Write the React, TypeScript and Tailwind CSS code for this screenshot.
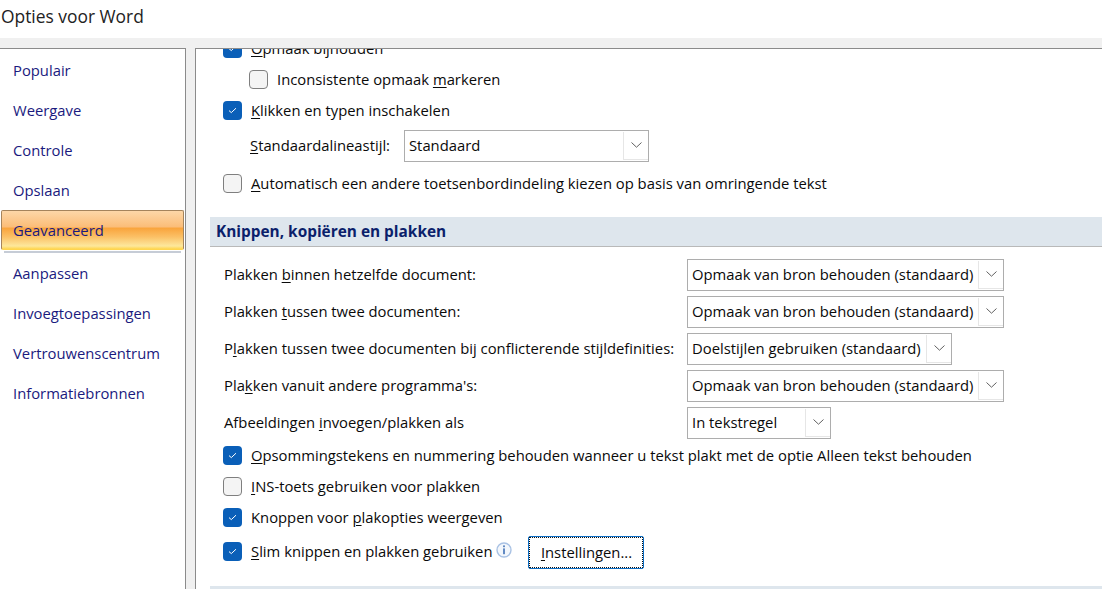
const font = "[font-family:'Open_Sans','Noto_Sans',sans-serif]"

const navItems = ['Populair', 'Weergave', 'Controle', 'Opslaan']
const navItemsBelow = ['Aanpassen', 'Invoegtoepassingen', 'Vertrouwenscentrum', 'Informatiebronnen']

function Check({ checked }: { checked?: boolean }) {
  if (checked) {
    return (
      <span className="flex h-[19px] w-[19px] shrink-0 items-center justify-center rounded-[4px] bg-[#0a5fb8]">
        <svg width="9" height="7" viewBox="0 0 9 7" fill="none">
          <path d="M1 3.6 3.3 5.6 8 1.2" stroke="#fff" strokeWidth="1" />
        </svg>
      </span>
    )
  }
  return <span className="h-[19px] w-[19px] shrink-0 rounded-[4px] border border-[#7f7f7f] bg-[#f4f4f4]" />
}

function Select({ value, width }: { value: string; width: string }) {
  return (
    <div className={`flex h-[32px] items-stretch border border-[#adadad] bg-white pl-[4px] ${width}`}>
      <span className="flex-1 self-center whitespace-nowrap text-[14.8px] text-[#0a0a0a]">{value}</span>
      <span className="my-[1px] flex w-[25px] items-center justify-center border-l border-b border-[#e6e6e6]">
        <svg width="11" height="6" viewBox="0 0 11 6" fill="none">
          <path d="M.5.5 5.5 5.2 10.5.5" stroke="#606060" strokeWidth="1" />
        </svg>
      </span>
    </div>
  )
}

function PasteRow({ label, value, width }: { label: React.ReactNode; value: string; width: string }) {
  return (
    <div className="flex h-[37px] items-center">
      <span className="w-[463px] shrink-0 whitespace-nowrap">{label}</span>
      <Select value={value} width={width} />
    </div>
  )
}

function CheckRow({ checked, height, children }: { checked?: boolean; height: string; children: React.ReactNode }) {
  return (
    <div className={`flex items-center gap-[9px] ${height}`}>
      <Check checked={checked} />
      <span className="whitespace-nowrap">{children}</span>
    </div>
  )
}

export default function App() {
  return (
    <div className={`flex h-[589px] w-[1102px] flex-col overflow-hidden bg-[#f0f0f0] text-[14.8px] text-[#0a0a0a] ${font}`}>
      <div className="flex h-[38px] shrink-0 items-center bg-white pl-[1px] pb-[5px] text-[17.4px] text-[#222]">
        Opties voor Word
      </div>

      <div className="mt-[10px] flex min-h-0 flex-1">
        {/* Sidebar */}
        <nav className="w-[186px] shrink-0 border-t border-r border-[#8b8b8b] bg-white pt-[1px] text-[#1a1a7e]">
          {navItems.map((item) => (
            <div key={item} className="flex h-[40px] items-center pl-[13px]">
              {item}
            </div>
          ))}
          <div className="ml-[1px] flex h-[40px] w-[183px] items-center rounded-[2px] border border-[#a5845c] border-b-[#ffd54f] bg-[linear-gradient(#fdd7a8_0%,#fbbd78_42%,#f9a43c_45%,#fbc066_68%,#fde89c_92%,#ffd54f_100%)] pl-[11px]">
            Geavanceerd
          </div>
          <div className="ml-[4px] mt-[1px] h-[2px] w-[177px] bg-[#c6ccd6]" />
          <div>
            {navItemsBelow.map((item) => (
              <div key={item} className="flex h-[40px] items-center pl-[13px]">
                {item}
              </div>
            ))}
          </div>
        </nav>

        {/* Content */}
        <main className="ml-[9px] min-w-0 flex-1 overflow-hidden border-t border-l border-[#8b8b8b] bg-white">
          <div className="-mt-[16px] pl-[14px]">
            <div className="pl-[13px]">
              <CheckRow checked height="h-[31px]">
                <span className="underline underline-offset-2">O</span>pmaak bijhouden
              </CheckRow>
              <div className="pl-[26px]">
                <CheckRow height="h-[31px]">
                  Inconsistente opmaak <span className="underline underline-offset-2">m</span>arkeren
                </CheckRow>
              </div>
              <CheckRow checked height="h-[31px]">
                <span className="underline underline-offset-2">K</span>likken en typen inschakelen
              </CheckRow>
              <div className="flex h-[39px] items-center pl-[27px]">
                <span className="w-[154px] whitespace-nowrap">
                  <span className="underline underline-offset-2">S</span>tandaardalineastijl:
                </span>
                <Select value="Standaard" width="w-[245px]" />
              </div>
              <CheckRow height="h-[37px]">
                <span className="underline underline-offset-2">A</span>utomatisch een andere toetsenbordindeling kiezen op basis van omringende tekst
              </CheckRow>
            </div>

            <div className="mt-[15px] flex h-[30px] items-center border-b border-[#b9b9b9] bg-[#dee6ed] pl-[6px] text-[15.4px] font-bold text-[#0b1f6b]">
              Knippen, kopiëren en plakken
            </div>

            <div className="mt-[9px] pl-[14px]">
              <PasteRow
                label={<>Plakken <span className="underline underline-offset-2">b</span>innen hetzelfde document:</>}
                value="Opmaak van bron behouden (standaard)"
                width="w-[317px]"
              />
              <PasteRow
                label={<>Plakken <span className="underline underline-offset-2">t</span>ussen twee documenten:</>}
                value="Opmaak van bron behouden (standaard)"
                width="w-[317px]"
              />
              <PasteRow
                label={<>P<span className="underline underline-offset-2">l</span>akken tussen twee documenten bij conflicterende stijldefinities:</>}
                value="Doelstijlen gebruiken (standaard)"
                width="w-[265px]"
              />
              <PasteRow
                label={<>Pla<span className="underline underline-offset-2">k</span>ken vanuit andere programma's:</>}
                value="Opmaak van bron behouden (standaard)"
                width="w-[317px]"
              />
              <PasteRow
                label={<>Afbeeldingen <span className="underline underline-offset-2">i</span>nvoegen/plakken als</>}
                value="In tekstregel"
                width="w-[144px]"
              />
            </div>

            <div className="-mt-[1px] pl-[13px]">
              <CheckRow checked height="h-[31px]">
                <span className="underline underline-offset-2">O</span>psommingstekens en nummering behouden wanneer u tekst plakt met de optie Alleen tekst behouden
              </CheckRow>
              <CheckRow height="h-[31px]">
                <span className="underline underline-offset-2">I</span>NS-toets gebruiken voor plakken
              </CheckRow>
              <CheckRow checked height="h-[31px]">
                Knoppen voor <span className="underline underline-offset-2">p</span>lakopties weergeven
              </CheckRow>
              <div className="flex h-[37px] items-center">
                <CheckRow checked height="h-[37px]">
                  <span className="underline underline-offset-2">S</span>lim knippen en plakken gebruiken
                </CheckRow>
                <svg className="mb-[3px] ml-[4px] shrink-0" width="16" height="16" viewBox="0 0 16 16" fill="none">
                  <circle cx="8" cy="8" r="7" fill="#f3f7fc" stroke="#a9c2e4" strokeWidth="1.4" />
                  <rect x="7.2" y="3.4" width="1.6" height="1.8" fill="#3f6fb5" />
                  <rect x="7.2" y="6.4" width="1.6" height="5.8" fill="#3f6fb5" />
                </svg>
                <button className="ml-[16px] mt-[2px] h-[33px] w-[116px] rounded-[2px] border border-[#0a6cc4] text-[#0a0a0a] outline-1 -outline-offset-2 outline-dotted outline-[#111]">
                  <span className="underline underline-offset-2">I</span>nstellingen...
                </button>
              </div>
            </div>

            <div className="mt-[16px] h-[8px] bg-[#dee6ed]" />
          </div>
        </main>
      </div>
    </div>
  )
}
